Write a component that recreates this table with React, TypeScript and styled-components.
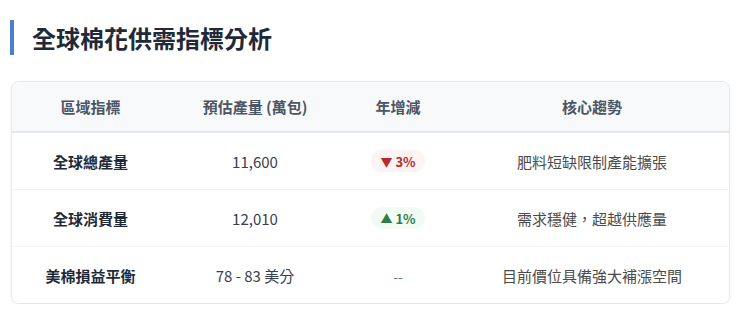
import React from "react";
import styled, { createGlobalStyle } from "styled-components";

const GlobalStyle = createGlobalStyle`
  body {
    margin: 0;
    background: #ffffff;
    font-family: "Noto Sans CJK TC", "Noto Sans", sans-serif;
  }
`;

const Page = styled.div`
  padding: 20px 10px 0 11px;
`;

const Title = styled.h2`
  margin: 0;
  height: 35px;
  display: flex;
  align-items: center;
  border-left: 4px solid #4a7fd0;
  margin-left: -1px;
  padding-left: 18px;
  font-size: 24px;
  font-weight: 700;
  color: #1f2937;
`;

const Card = styled.div`
  margin-top: 26px;
  border: 1px solid #e5e7eb;
  border-radius: 8px;
  box-shadow: 0 1px 3px rgba(0, 0, 0, 0.05);
  overflow: hidden;
`;

const Row = styled.div<{ $head?: boolean; $last?: boolean }>`
  display: grid;
  grid-template-columns: 157px 172px 114px 1fr;
  align-items: center;
  height: ${(p) => (p.$head ? "49px" : "56px")};
  background: ${(p) => (p.$head ? "#f8f9fb" : "#ffffff")};
  border-bottom: ${(p) =>
    p.$head ? "2px solid #e5e7eb" : p.$last ? "none" : "1px solid #f2f3f5"};
`;

const Cell = styled.div<{ $kind?: "head" | "name" | "num" | "text" }>`
  text-align: center;
  font-size: 15px;
  font-weight: ${(p) => (p.$kind === "head" || p.$kind === "name" ? 700 : 400)};
  color: ${(p) =>
    p.$kind === "head"
      ? "#4b5563"
      : p.$kind === "name"
      ? "#1f2937"
      : p.$kind === "num"
      ? "#374151"
      : "#4b4b4b"};
`;

const Badge = styled.span<{ $up: boolean }>`
  display: inline-flex;
  align-items: center;
  gap: 3px;
  height: 22px;
  padding: 0 9px;
  border-radius: 11px;
  font-size: 13px;
  font-weight: 700;
  background: ${(p) => (p.$up ? "#f1fbf4" : "#fef3f3")};
  color: ${(p) => (p.$up ? "#2e7d4a" : "#b52a2a")};
`;

const Arrow = styled.span`
  font-size: 12px;
`;

const Dash = styled.span`
  color: #6b7280;
  font-size: 14px;
`;

type Item = {
  name: string;
  value: string;
  change: number | null;
  trend: string;
};

const items: Item[] = [
  { name: "全球總產量", value: "11,600", change: -3, trend: "肥料短缺限制產能擴張" },
  { name: "全球消費量", value: "12,010", change: 1, trend: "需求穩健，超越供應量" },
  { name: "美棉損益平衡", value: "78 - 83 美分", change: null, trend: "目前價位具備強大補漲空間" },
];

const App: React.FC = () => {
  return (
    <Page>
      <GlobalStyle />
      <Title>全球棉花供需指標分析</Title>
      <Card>
        <Row $head>
          <Cell $kind="head">區域指標</Cell>
          <Cell $kind="head">預估產量 (萬包)</Cell>
          <Cell $kind="head">年增減</Cell>
          <Cell $kind="head">核心趨勢</Cell>
        </Row>
        {items.map((item, i) => (
          <Row key={item.name} $last={i === items.length - 1}>
            <Cell $kind="name">{item.name}</Cell>
            <Cell $kind="num">{item.value}</Cell>
            <Cell>
              {item.change === null ? (
                <Dash>--</Dash>
              ) : (
                <Badge $up={item.change > 0}>
                  <Arrow>{item.change > 0 ? "▲" : "▼"}</Arrow>
                  {Math.abs(item.change)}%
                </Badge>
              )}
            </Cell>
            <Cell $kind="text">{item.trend}</Cell>
          </Row>
        ))}
      </Card>
    </Page>
  );
};

export default App;
